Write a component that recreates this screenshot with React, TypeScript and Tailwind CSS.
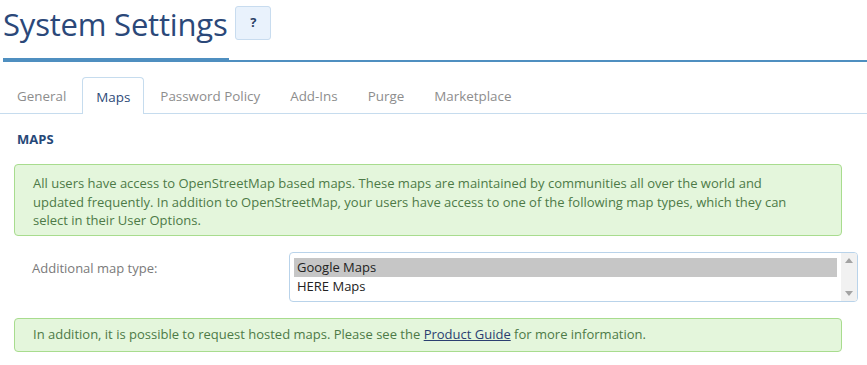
import React from 'react';

const tabs = ['General', 'Maps', 'Password Policy', 'Add-Ins', 'Purge', 'Marketplace'];

const App = () => {
  return (
    <div className="w-[867px] h-[365px] overflow-hidden bg-white font-['Open_Sans',sans-serif]">
      {/* Page title */}
      <div className="flex items-start pl-[3px] pt-[4px] h-[56px]">
        <h1 className="text-[31px] leading-[40px] text-[#2b4879] tracking-[-0.2px]">System Settings</h1>
        <button className="ml-[8px] mt-[2px] w-[36px] h-[34px] rounded-[3px] border border-[#c8dcef] bg-[#e9f2fc] text-[13px] font-bold text-[#2b3f66]">
          ?
        </button>
      </div>
      <div className="flex items-end h-[6px] pl-[3px]">
        <div className="w-[226px] h-[4px] bg-[#4f8fc0]" />
        <div className="flex-1 h-[2px] bg-[#4f8fc0]" />
      </div>

      {/* Tabs */}
      <div className="mt-[15px] flex items-end h-[37px] border-b border-[#c6dcee] pl-[3px]">
        {tabs.map((t) => (
          <div
            key={t}
            className={
              t === 'Maps'
                ? 'mr-[2px] -mb-px h-[37px] px-[13px] pt-[3px] flex items-center rounded-t-[4px] border border-b-0 border-[#c6dcee] bg-white text-[13.4px] text-[#2e4a78]'
                : 'mr-[2px] h-[36px] px-[14px] pt-[3px] flex items-center text-[13.4px] text-[#8d8d8d]'
            }
          >
            {t}
          </div>
        ))}
      </div>

      {/* Section */}
      <div className="pl-[17px] pt-[16px] h-[50px] text-[13px] font-bold text-[#264878] leading-[18px]">MAPS</div>

      <div className="ml-[14px] w-[828px] h-[72px] rounded-[4px] border border-[#a8dc8e] bg-[#e4f6dc] pl-[18px] pr-[38px] pt-[9px] text-[13px] leading-[18.5px] text-[#4d7a47]">
        All users have access to OpenStreetMap based maps. These maps are maintained by communities all over the world and
        updated frequently. In addition to OpenStreetMap, your users have access to one of the following map types, which they can
        select in their User Options.
      </div>

      {/* Additional map type */}
      <div className="mt-[16px] flex h-[50px]">
        <div className="w-[289px] pl-[32px] pt-[7px] text-[13px] text-[#7a7a7a]">Additional map type:</div>
        <div className="w-[569px] h-[50px] flex rounded-[4px] border border-[#b9d3ea] bg-white">
          <div className="flex-1 pl-[4px] pt-[5px] pr-[4px]">
            <div className="h-[19px] bg-[#c6c6c6] pl-[3px] text-[13px] leading-[19px] text-[#222]">Google Maps</div>
            <div className="h-[19px] pl-[3px] text-[13px] leading-[19px] text-[#222]">HERE Maps</div>
          </div>
          <div className="w-[16px] flex flex-col items-center justify-between bg-[#f1f1f1] py-[5px] rounded-r-[3px]">
            <svg width="8" height="5" viewBox="0 0 8 5"><path d="M4 0L8 5H0z" fill="#a3a3a3" /></svg>
            <svg width="8" height="5" viewBox="0 0 8 5"><path d="M0 0H8L4 5z" fill="#a3a3a3" /></svg>
          </div>
        </div>
      </div>

      <div className="mt-[16px] ml-[14px] w-[828px] h-[34px] flex items-center rounded-[4px] border border-[#a8dc8e] bg-[#e4f6dc] pl-[18px] text-[13px] text-[#4d7a47]">
        <span>
          In addition, it is possible to request hosted maps. Please see the{' '}
          <a href="#" className="underline text-[#2b3f70]">Product Guide</a> for more information.
        </span>
      </div>
    </div>
  );
};

export default App;
